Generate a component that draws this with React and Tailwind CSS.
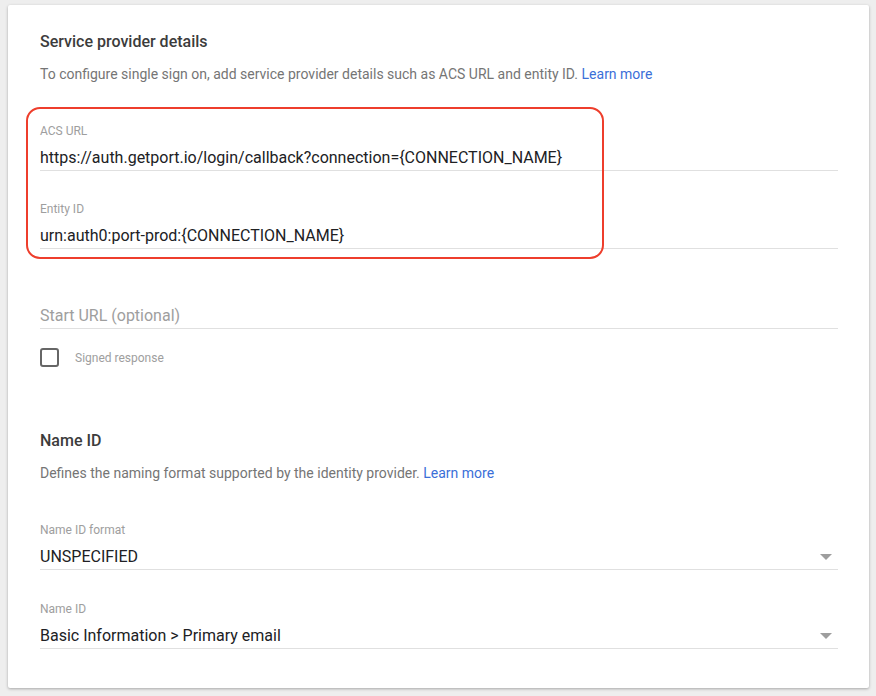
import React from "react";

const font = { fontFamily: "Roboto, 'Noto Sans', sans-serif" };

function Field({ label, value, placeholder, select }) {
  return (
    <div className="flex flex-col">
      <div className="h-4 text-[12px] leading-4 text-[#9e9e9e]">{label || ""}</div>
      <div className="mt-[7px] flex h-[25px] items-start justify-between border-b border-[#e0e0e0]">
        {value ? (
          <span className="text-[16px] leading-6 text-[#202124]">{value}</span>
        ) : (
          <span className="text-[16px] leading-6 text-[#9e9e9e]">{placeholder}</span>
        )}
        {select && (
          <svg width="12" height="6" viewBox="0 0 12 6" className="mr-[6px] mt-[9px]">
            <path d="M0 0 L12 0 L6 6 Z" fill="#9e9e9e" />
          </svg>
        )}
      </div>
    </div>
  );
}

export default function App() {
  return (
    <div className="min-h-[696px] w-[876px] bg-[#eeeeee] pl-2 pt-[5px]" style={font}>
      <div className="relative h-[683px] w-[861px] rounded-[2px] bg-white pl-8 pr-[31px] pt-[27px] shadow-[0_1px_3px_rgba(0,0,0,0.3)]">
        <h2 className="text-[16px] font-medium leading-5 text-[#3c3c3c]">Service provider details</h2>
        <p className="mt-3 text-[14px] leading-5 text-[#757575]">
          To configure single sign on, add service provider details such as ACS URL and entity ID.{" "}
          <span className="text-[#3b6fd8]">Learn more</span>
        </p>

        <div className="mt-[39px]">
          <Field label="ACS URL" value="https://auth.getport.io/login/callback?connection={CONNECTION_NAME}" />
        </div>
        <div className="mt-[30px]">
          <Field label="Entity ID" value="urn:auth0:port-prod:{CONNECTION_NAME}" />
        </div>
        <div className="mt-[32px]">
          <Field placeholder="Start URL (optional)" />
        </div>

        <label className="mt-[19px] flex items-center gap-4">
          <span className="h-[19px] w-[19px] rounded-[3px] border-2 border-[#666666]" />
          <span className="text-[12px] leading-4 text-[#9e9e9e]">Signed response</span>
        </label>

        <h2 className="mt-[64px] text-[16px] font-medium leading-5 text-[#3c3c3c]">Name ID</h2>
        <p className="mt-3 text-[14px] leading-5 text-[#757575]">
          Defines the naming format supported by the identity provider.{" "}
          <span className="text-[#3b6fd8]">Learn more</span>
        </p>

        <div className="mt-[39px]">
          <Field label="Name ID format" value="UNSPECIFIED" select />
        </div>
        <div className="mt-[31px]">
          <Field label="Name ID" value="Basic Information > Primary email" select />
        </div>

        {/* highlight ring around the ACS URL and Entity ID fields */}
        <div className="pointer-events-none absolute left-[18px] top-[102px] h-[152px] w-[578px] rounded-[14px] border-2 border-[#ee3e2c]" />
      </div>
    </div>
  );
}
